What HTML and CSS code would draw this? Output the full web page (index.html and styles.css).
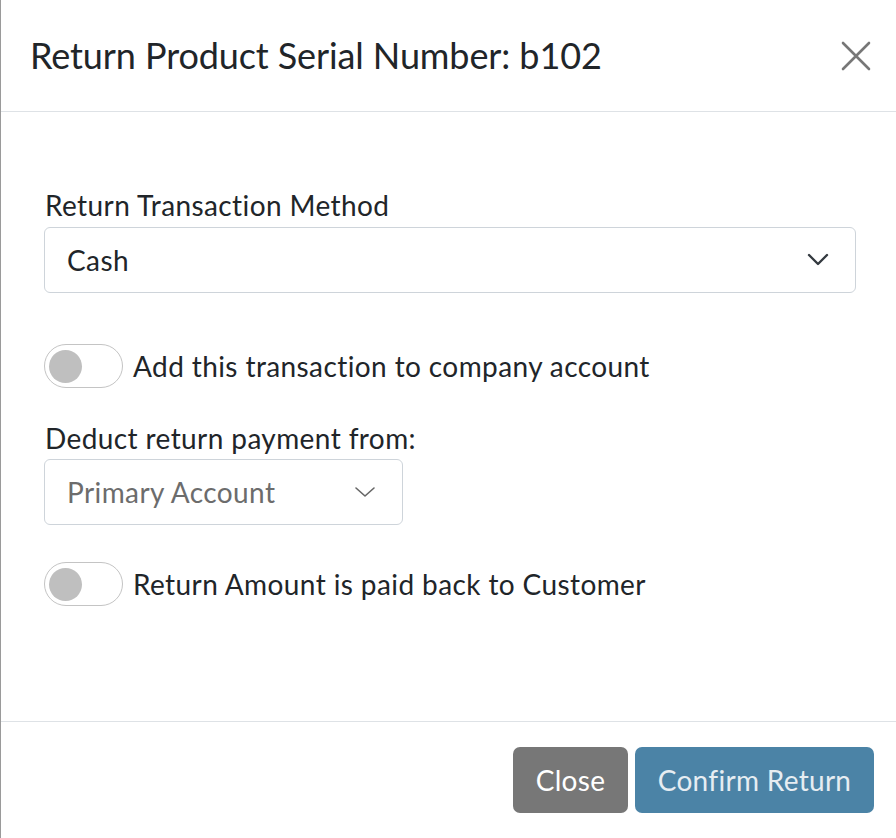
FILE: index.html
```html
<!DOCTYPE html>
<html lang="en">
<head>
<meta charset="utf-8">
<title>Return Product</title>
<link rel="stylesheet" href="styles.css">
</head>
<body>
<div class="modal">
  <header class="modal-header">
    <h1 class="modal-title">Return Product Serial Number: b102</h1>
    <button class="btn-x" aria-label="Close">
      <svg viewBox="0 0 30 30" width="30" height="30"><path d="M2 2 L28 28 M28 2 L2 28" stroke="#777" stroke-width="2.6" stroke-linecap="round" fill="none"/></svg>
    </button>
  </header>
  <main class="modal-body">
    <label class="field-label">Return Transaction Method</label>
    <div class="select select-wide">
      <span class="select-value">Cash</span>
      <svg class="chev" viewBox="0 0 22 14" width="22" height="14"><path d="M2 2 L11 11 L20 2" stroke="#343a40" stroke-width="2.4" stroke-linecap="round" stroke-linejoin="round" fill="none"/></svg>
    </div>
    <div class="toggle-row toggle-row-first">
      <span class="toggle"><span class="knob"></span></span>
      <span class="toggle-label">Add this transaction to company account</span>
    </div>
    <label class="field-label label-deduct">Deduct return payment from:</label>
    <div class="select select-narrow">
      <span class="select-value muted">Primary Account</span>
      <svg class="chev" viewBox="0 0 22 12" width="22" height="12"><path d="M2 2 L11 10 L20 2" stroke="#666" stroke-width="1.6" stroke-linecap="round" stroke-linejoin="round" fill="none"/></svg>
    </div>
    <div class="toggle-row toggle-row-second">
      <span class="toggle"><span class="knob"></span></span>
      <span class="toggle-label">Return Amount is paid back to Customer</span>
    </div>
  </main>
  <footer class="modal-footer">
    <button class="btn btn-close">Close</button>
    <button class="btn btn-confirm">Confirm Return</button>
  </footer>
</div>
</body>
</html>
```
FILE: styles.css
```css
* { box-sizing: border-box; }
html, body { margin: 0; padding: 0; background: #fff; }
body {
  font-family: Lato, "Noto Sans", sans-serif;
  color: #212529;
  width: 896px;
  height: 838px;
  overflow: hidden;
}
.modal {
  height: 838px;
  border-left: 1px solid #9a9a9a;
  display: flex;
  flex-direction: column;
  background: #fff;
}
.modal-header {
  height: 112px;
  border-bottom: 1px solid #dee2e6;
  display: flex;
  align-items: center;
  justify-content: space-between;
  padding: 0 25px 0 29px;
}
.modal-title {
  margin: 0;
  font-size: 36px;
  font-weight: 400;
  color: #212529;
  line-height: 1.2;
  letter-spacing: -0.1px;
}
.btn-x {
  border: 0;
  background: transparent;
  padding: 0;
  width: 30px;
  height: 30px;
  display: flex;
  margin-top: 1px;
}
.modal-body {
  flex: 1;
  padding: 76px 39px 0 43px;
  display: flex;
  flex-direction: column;
  align-items: flex-start;
  letter-spacing: 0.4px;
}
.field-label {
  display: block;
  font-size: 28px;
  line-height: 34px;
  margin-bottom: 5px;
  padding-left: 1px;
}
.select {
  height: 66px;
  border: 1px solid #ced4da;
  border-radius: 6px;
  display: flex;
  align-items: center;
  justify-content: space-between;
  padding: 0 26px 0 22px;
  font-size: 28px;
}
.select-wide { width: 812px; }
.select-narrow { width: 359px; }
.select-value { color: #212529; }
.select-value.muted { color: #6c6c6c; }
.toggle-row {
  display: flex;
  align-items: center;
  gap: 10px;
  font-size: 28px;
}
.toggle-row-first { margin-top: 51px; }
.toggle-row-second { margin-top: 37px; }
.toggle {
  width: 79px;
  height: 44px;
  border: 1px solid #c4c4c4;
  border-radius: 22px;
  display: flex;
  align-items: center;
  padding-left: 4px;
}
.knob {
  width: 33px;
  height: 33px;
  border-radius: 50%;
  background: #bfbfbf;
}
.label-deduct { margin-top: 33px; margin-bottom: 4px; }
.modal-footer {
  flex: 0 0 117px;
  border-top: 1px solid #dee2e6;
  display: flex;
  align-items: center;
  justify-content: flex-end;
  gap: 7px;
  padding-right: 22px;
}
.btn {
  height: 66px;
  border: 0;
  border-radius: 7px;
  font-family: inherit;
  font-size: 28px;
  padding: 0 20px;
  letter-spacing: 0.3px;
}
.btn-close { background: #777; color: #fff; width: 115px; }
.btn-confirm { background: #4b83a6; color: #e6edf2; width: 239px; }
```
